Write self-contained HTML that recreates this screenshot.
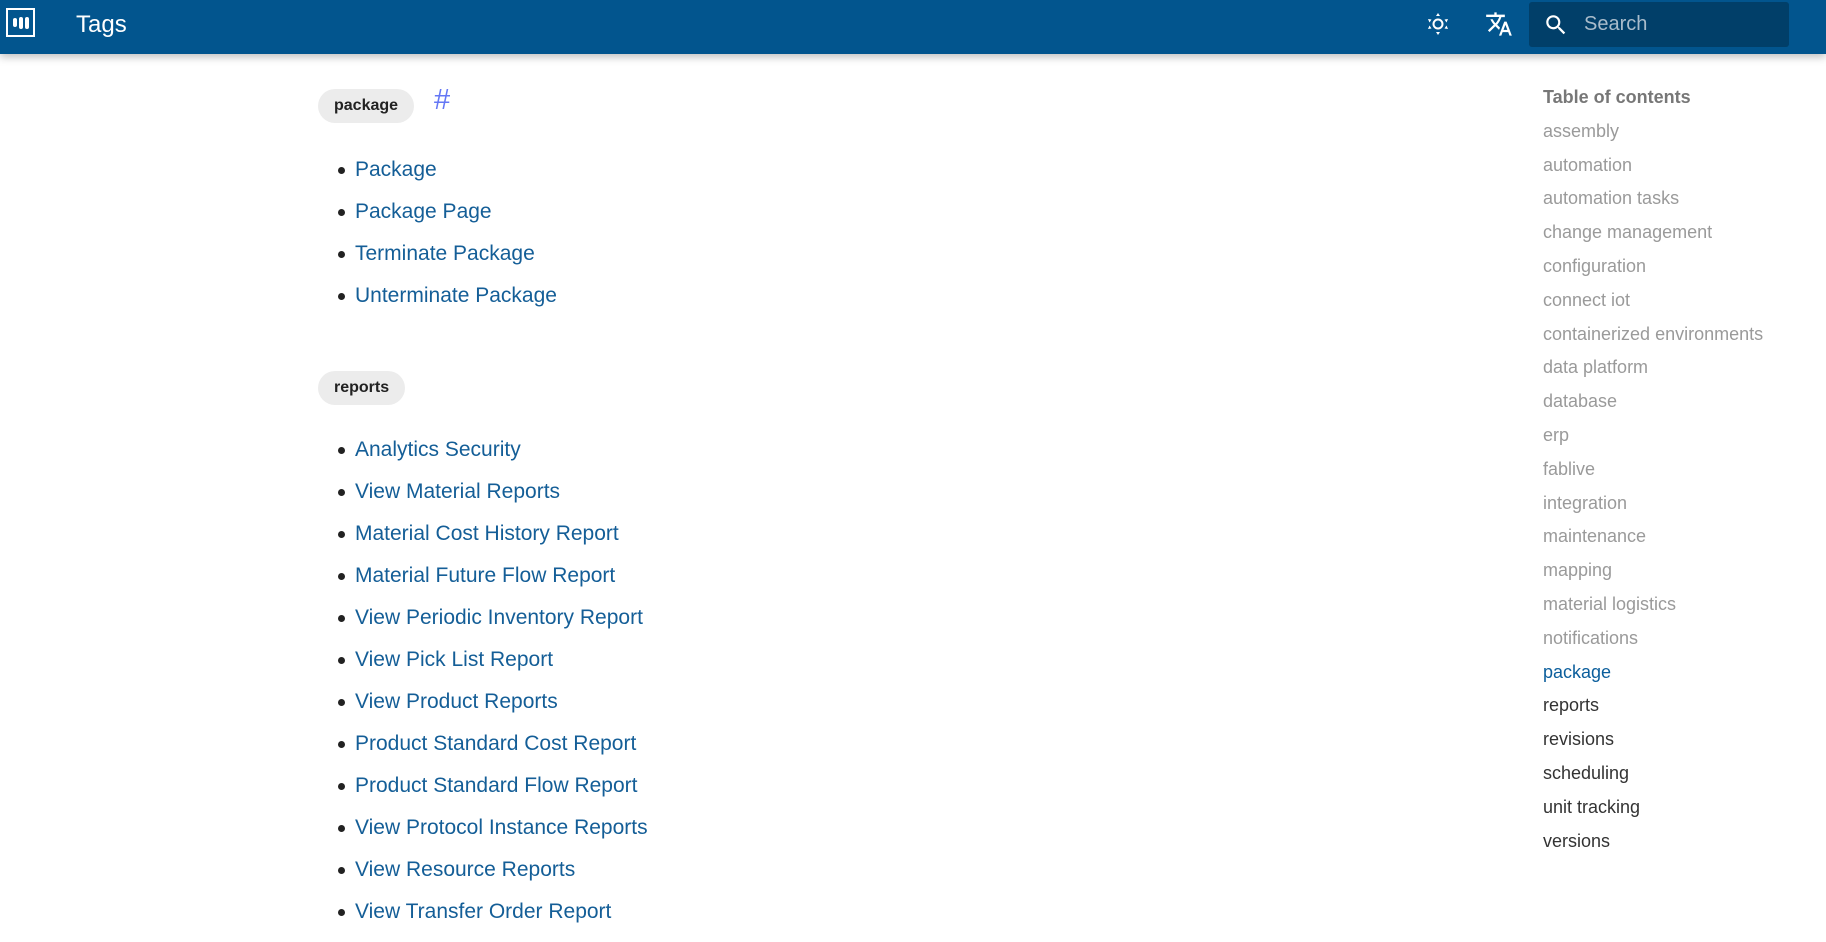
<!DOCTYPE html>
<html><head><meta charset="utf-8"><style>
*{margin:0;padding:0;box-sizing:border-box}
body{width:1826px;height:920px;overflow:hidden;background:#fff;font-family:"Liberation Sans",sans-serif;position:relative}
.hdr{position:absolute;left:0;top:0;width:1826px;height:54px;background:#02558e;box-shadow:0 3px 8px rgba(0,0,0,.25)}
.logo{position:absolute;left:6px;top:8px;width:29px;height:29px;border:2px solid #fff}
.logo i{position:absolute;top:7px;width:4px;height:12px;background:#fff;border-radius:2px}
.title{position:absolute;left:76px;top:11px;color:#fff;font-size:24px}
.search{position:absolute;left:1529px;top:2px;width:260px;height:45px;background:#013f69;border-radius:3px}
.search span{position:absolute;left:55px;top:11px;color:#a9bccb;font-size:20px}
.chip{position:absolute;left:318px;height:34px;padding:0 16px;border-radius:17px;background:#ececec;font-weight:bold;font-size:16px;line-height:34px;color:#222}
.hash{position:absolute;left:434px;top:84px;color:#6477f5;font-size:29px}
ul{position:absolute;left:355px;list-style:none}
li{position:relative;height:42px;font-size:21px;color:#145e97;line-height:24px}
li:before{content:"";position:absolute;left:-17px;top:9px;width:7px;height:7px;border-radius:50%;background:#222}
.toc{position:absolute;left:1543px;top:81px;font-size:18px;line-height:33.8px;color:#9a9a9a}
.toc b{color:#777;display:block}
</style></head><body>
<div class="hdr">
<div class="logo"><i style="left:5px;height:9px;top:8px"></i><i style="left:11px"></i><i style="left:17px"></i></div>
<div class="title">Tags</div>
<svg style="position:absolute;left:1426px;top:12px" width="24" height="24" viewBox="0 0 24 24" fill="#fff"><circle cx="12" cy="12" r="4.5" fill="none" stroke="#fff" stroke-width="2"/><path d="M12 1l2 3h-4zM12 23l2-3h-4zM2 7l3.5.5-2 3zM22 7l-3.5.5 2 3zM2 17l3.5-.5-2-3zM22 17l-3.5-.5 2-3z"/></svg>
<svg style="position:absolute;left:1485px;top:10px" width="28" height="28" viewBox="0 0 24 24" fill="#fff"><path d="M12.9 15.1l-2.5-2.5c1.7-1.9 2.9-4.1 3.6-6.5H17V4h-7V2H8v2H1v2h11.2c-.7 1.9-1.7 3.8-3.2 5.4-1-1.1-1.8-2.3-2.4-3.5H4.6c.7 1.6 1.7 3.2 3 4.6l-5.1 5 1.4 1.4 5-5 3.1 3.1.9-1.9zM18.5 10h-2L12 22h2l1.1-3h4.8l1.1 3h2l-4.5-12zm-2.6 7l1.6-4.3 1.6 4.3h-3.2z"/></svg>
<div class="search"><svg style="position:absolute;left:14px;top:10px" width="26" height="26" viewBox="0 0 24 24" fill="#fff"><path d="M15.5 14h-.8l-.3-.3c1-1.1 1.6-2.6 1.6-4.2a6.5 6.5 0 1 0-6.5 6.5c1.6 0 3.1-.6 4.2-1.6l.3.3v.8l5 5 1.5-1.5-5-5zm-6 0C7 14 5 12 5 9.5S7 5 9.5 5 14 7 14 9.5 12 14 9.5 14z"/></svg><span>Search</span></div>
</div>
<div class="chip" style="top:89px">package</div>
<div class="hash">#</div>
<ul style="top:158px"><li>Package</li><li>Package Page</li><li>Terminate Package</li><li>Unterminate Package</li></ul>
<div class="chip" style="top:371px">reports</div>
<ul style="top:438px"><li>Analytics Security</li><li>View Material Reports</li><li>Material Cost History Report</li><li>Material Future Flow Report</li><li>View Periodic Inventory Report</li><li>View Pick List Report</li><li>View Product Reports</li><li>Product Standard Cost Report</li><li>Product Standard Flow Report</li><li>View Protocol Instance Reports</li><li>View Resource Reports</li><li>View Transfer Order Report</li></ul>
<div class="toc"><b>Table of contents</b>assembly<br>automation<br>automation tasks<br>change management<br>configuration<br>connect iot<br>containerized environments<br>data platform<br>database<br>erp<br>fablive<br>integration<br>maintenance<br>mapping<br>material logistics<br>notifications<br><span style="color:#0b5e9c">package</span><br><span style="color:#333">reports<br>revisions<br>scheduling<br>unit tracking<br>versions</span></div>
</body></html>
